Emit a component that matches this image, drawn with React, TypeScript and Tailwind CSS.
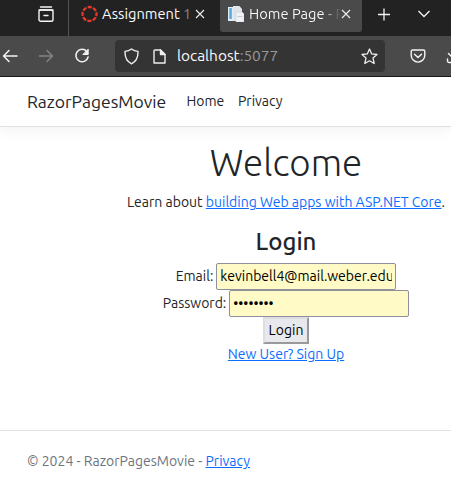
import type { ReactNode } from "react";

function Link({ children, className = "" }: { children: ReactNode; className?: string }) {
  return (
    <a href="#" className={`text-[#0d6efd] underline ${className}`}>
      {children}
    </a>
  );
}

function CloseIcon() {
  return (
    <svg width="10" height="10" viewBox="0 0 10 10" stroke="#eee" strokeWidth="1.1" className="shrink-0">
      <path d="M1 1l8 8M9 1L1 9" />
    </svg>
  );
}

function TabBar() {
  return (
    <div className="flex h-9 bg-[#222] text-[#fbfbfe]">
      <div className="flex w-[69px] shrink-0 border-r border-[#555] pt-1.5 pl-[38px]">
        <svg width="16" height="17" viewBox="0 0 16 17" fill="none" stroke="#f4f4f4" strokeWidth="1.4" strokeLinecap="round">
          <path d="M2.5 1h11M1 4h14M6 9.5h4" />
          <rect x="1" y="4" width="14" height="11.3" rx="1.8" />
        </svg>
      </div>
      <div className="flex w-[151px] shrink-0 pt-[5px] pl-3">
        <svg width="17" height="18" viewBox="0 0 17 18" fill="none" stroke="#e6392b">
          <circle cx="8.5" cy="9" r="7" strokeWidth="2.3" strokeDasharray="4.2 1.3" strokeDashoffset="2.1" />
        </svg>
        <div className="ml-1 w-[88px] overflow-hidden text-[14.67px] leading-[18px] whitespace-nowrap">
          Assignment <span className="text-[#888]">1</span>
        </div>
        <div className="ml-[5px] pt-1"><CloseIcon /></div>
      </div>
      <div className="flex h-8 w-[142px] shrink-0 rounded-b-[3px] bg-[#4a4a4a] pt-[5px] pl-2">
        <svg width="16" height="17" viewBox="0 0 16 17">
          <path d="M0 2h5v14H0z" fill="#e4edf4" />
          <path d="M1.300 3h2.500v11H1.300z" fill="#5aa9dc" />
          <path d="M5 1h6.500l2.500 3v12H5z" fill="#dfe5ea" />
          <path d="M8 7h6l2 2v8H8z" fill="#f1f2f5" stroke="#cbd0d7" strokeWidth=".6" />
          <path d="M9.500 11.500h5" stroke="#c5cbd2" />
        </svg>
        <div className="ml-[5px] w-[92px] bg-linear-to-r from-[#fbfbfe] from-80% to-[#4a4a4a] to-100% bg-clip-text text-[14.67px] leading-[18px] whitespace-nowrap text-transparent">
          Home Page - R
        </div>
        <div className="pt-1"><CloseIcon /></div>
      </div>
      <svg width="89" height="30" viewBox="0 0 89 30" fill="none" stroke="#f4f4f4" strokeWidth="1.3" className="shrink-0">
        <path d="M16 14.5h12M22 8.5v12M56.500 11l5.500 5.500 5.500-5.500" />
      </svg>
    </div>
  );
}

function Toolbar() {
  return (
    <div className="flex h-[41px] overflow-hidden border-b border-[#18171b] bg-[#4a4a4a]">
      <svg width="115" height="40" viewBox="0 0 115 40" fill="none" stroke="#f4f4f4" strokeWidth="1.5" strokeLinecap="round" strokeLinejoin="round" className="shrink-0">
        <path d="M17 20H3.500M9 14.500L3.500 20l5.500 5.500" />
        <path d="M39.500 20H52M47 14.500l5.500 5.500-5.500 5.500" stroke="#858585" />
        <path d="M86.800 15.500A6.200 6.200 0 1 0 88.100 21" />
        <path d="M88.200 13.500v5h-5z" fill="#f4f4f4" strokeWidth="1" />
      </svg>
      <div className="mt-1 flex h-8 w-[270px] shrink-0 items-center rounded-[4px] bg-[#343434] pl-[9px]">
        <svg width="15" height="17" viewBox="0 0 15 17" fill="none" stroke="#ededed" strokeWidth="1.4" strokeLinejoin="round">
          <path d="M7.500 1C5.500 2.500 3 3.200 1 3.400c-.2 5 .8 9.700 6.500 12.400C13.200 13.100 14.200 8.400 14 3.400 12 3.200 9.500 2.500 7.500 1z" />
        </svg>
        <svg width="13" height="15" viewBox="0 0 13 15" fill="none" stroke="#ededed" strokeWidth="1.4" strokeLinejoin="round" className="ml-[14px]">
          <path d="M2 1h5.500L12 5.500V14H1V2a1 1 0 0 1 1-1z" />
          <path d="M7.500 1v4.500H12z" fill="#ededed" />
        </svg>
        <div className="ml-[11px] w-[183.500px] text-[15.4px] leading-5 text-[#fbfbfe]">
          localhost<span className="text-[#999]">:5077</span>
        </div>
        <svg width="17" height="17" viewBox="0 0 17 17" fill="none" stroke="#ededed" strokeWidth="1.3" strokeLinejoin="round">
          <path d="M8.500 1l2.200 4.900 5.300.6-4 3.600 1.200 5.400-4.700-2.700-4.700 2.700L5 10.100 1 6.500l5.300-.6z" />
        </svg>
      </div>
      <svg width="66" height="40" viewBox="0 0 66 40" fill="none" stroke="#f4f4f4" strokeWidth="1.4" strokeLinecap="round" strokeLinejoin="round" className="shrink-0">
        <path d="M27.500 14h11a1.300 1.300 0 0 1 1.300 1.300v4a6.800 6.800 0 0 1-13.600 0v-4a1.300 1.300 0 0 1 1.300-1.300z" />
        <path d="M29.500 18.200L33 21.500l3.500-3.300" />
        <path d="M62.500 23v2a1.500 1.500 0 0 0 1.500 1.500h6M63.500 17.500l4.500 4.500" />
      </svg>
    </div>
  );
}

export default function App() {
  return (
    <div className="h-[485px] w-[451px] overflow-hidden bg-white font-['Ubuntu','Noto_Sans',sans-serif] text-[14px] leading-[21px] text-[#212529]">
      <TabBar />
      <Toolbar />
      <header className="flex h-[50px] items-center border-b border-[#dee2e6] pl-[27px] whitespace-nowrap shadow-[0_4px_12px_rgba(0,0,0,0.05)]">
        <div className="w-[159.500px] text-[17.500px]">RazorPagesMovie</div>
        <div className="w-[51.500px]">Home</div>
        <div>Privacy</div>
      </header>
      <main className="flex h-[303px] w-[572px] flex-col items-center pt-3 whitespace-nowrap">
        <h1 className="h-[53px] text-[36.750px] leading-[47px] font-light">Welcome</h1>
        <p>
          Learn about <Link>building Web apps with ASP.NET Core</Link>.
        </p>
        <h2 className="mt-[14px] h-[36px] text-[24px] leading-[29px] font-medium">Login</h2>
        <div className="flex h-[27px] items-center gap-[3px]">
          <label htmlFor="email">Email:</label>
          <input id="email" type="text" defaultValue="kevinbell4@mail.weber.edu" className="h-[27px] w-[180px] rounded-[2px] border border-[#8f8f9d] bg-[#fffac6] px-[3px] pb-[2px] text-black" />
        </div>
        <div className="flex h-[27px] items-center gap-[3px]">
          <label htmlFor="password">Password:</label>
          <input id="password" type="text" defaultValue="••••••••" className="h-[27px] w-[180px] rounded-[2px] border border-[#8f8f9d] bg-[#fffac6] px-[3px] pb-[2px] text-black" />
        </div>
        <button className="h-[27px] w-[46px] border-2 border-t-[#dedee2] border-r-[#999] border-b-[#999] border-l-[#dedee2] bg-[#e9e9ed] leading-[21px] text-black">Login</button>
        <Link>New User? Sign Up</Link>
      </main>
      <footer className="h-[55px] border-t border-[#dee2e6] pt-5 pl-[27px] text-[#6c757d]">
        © 2024 - RazorPagesMovie - <Link>Privacy</Link>
      </footer>
    </div>
  );
}
